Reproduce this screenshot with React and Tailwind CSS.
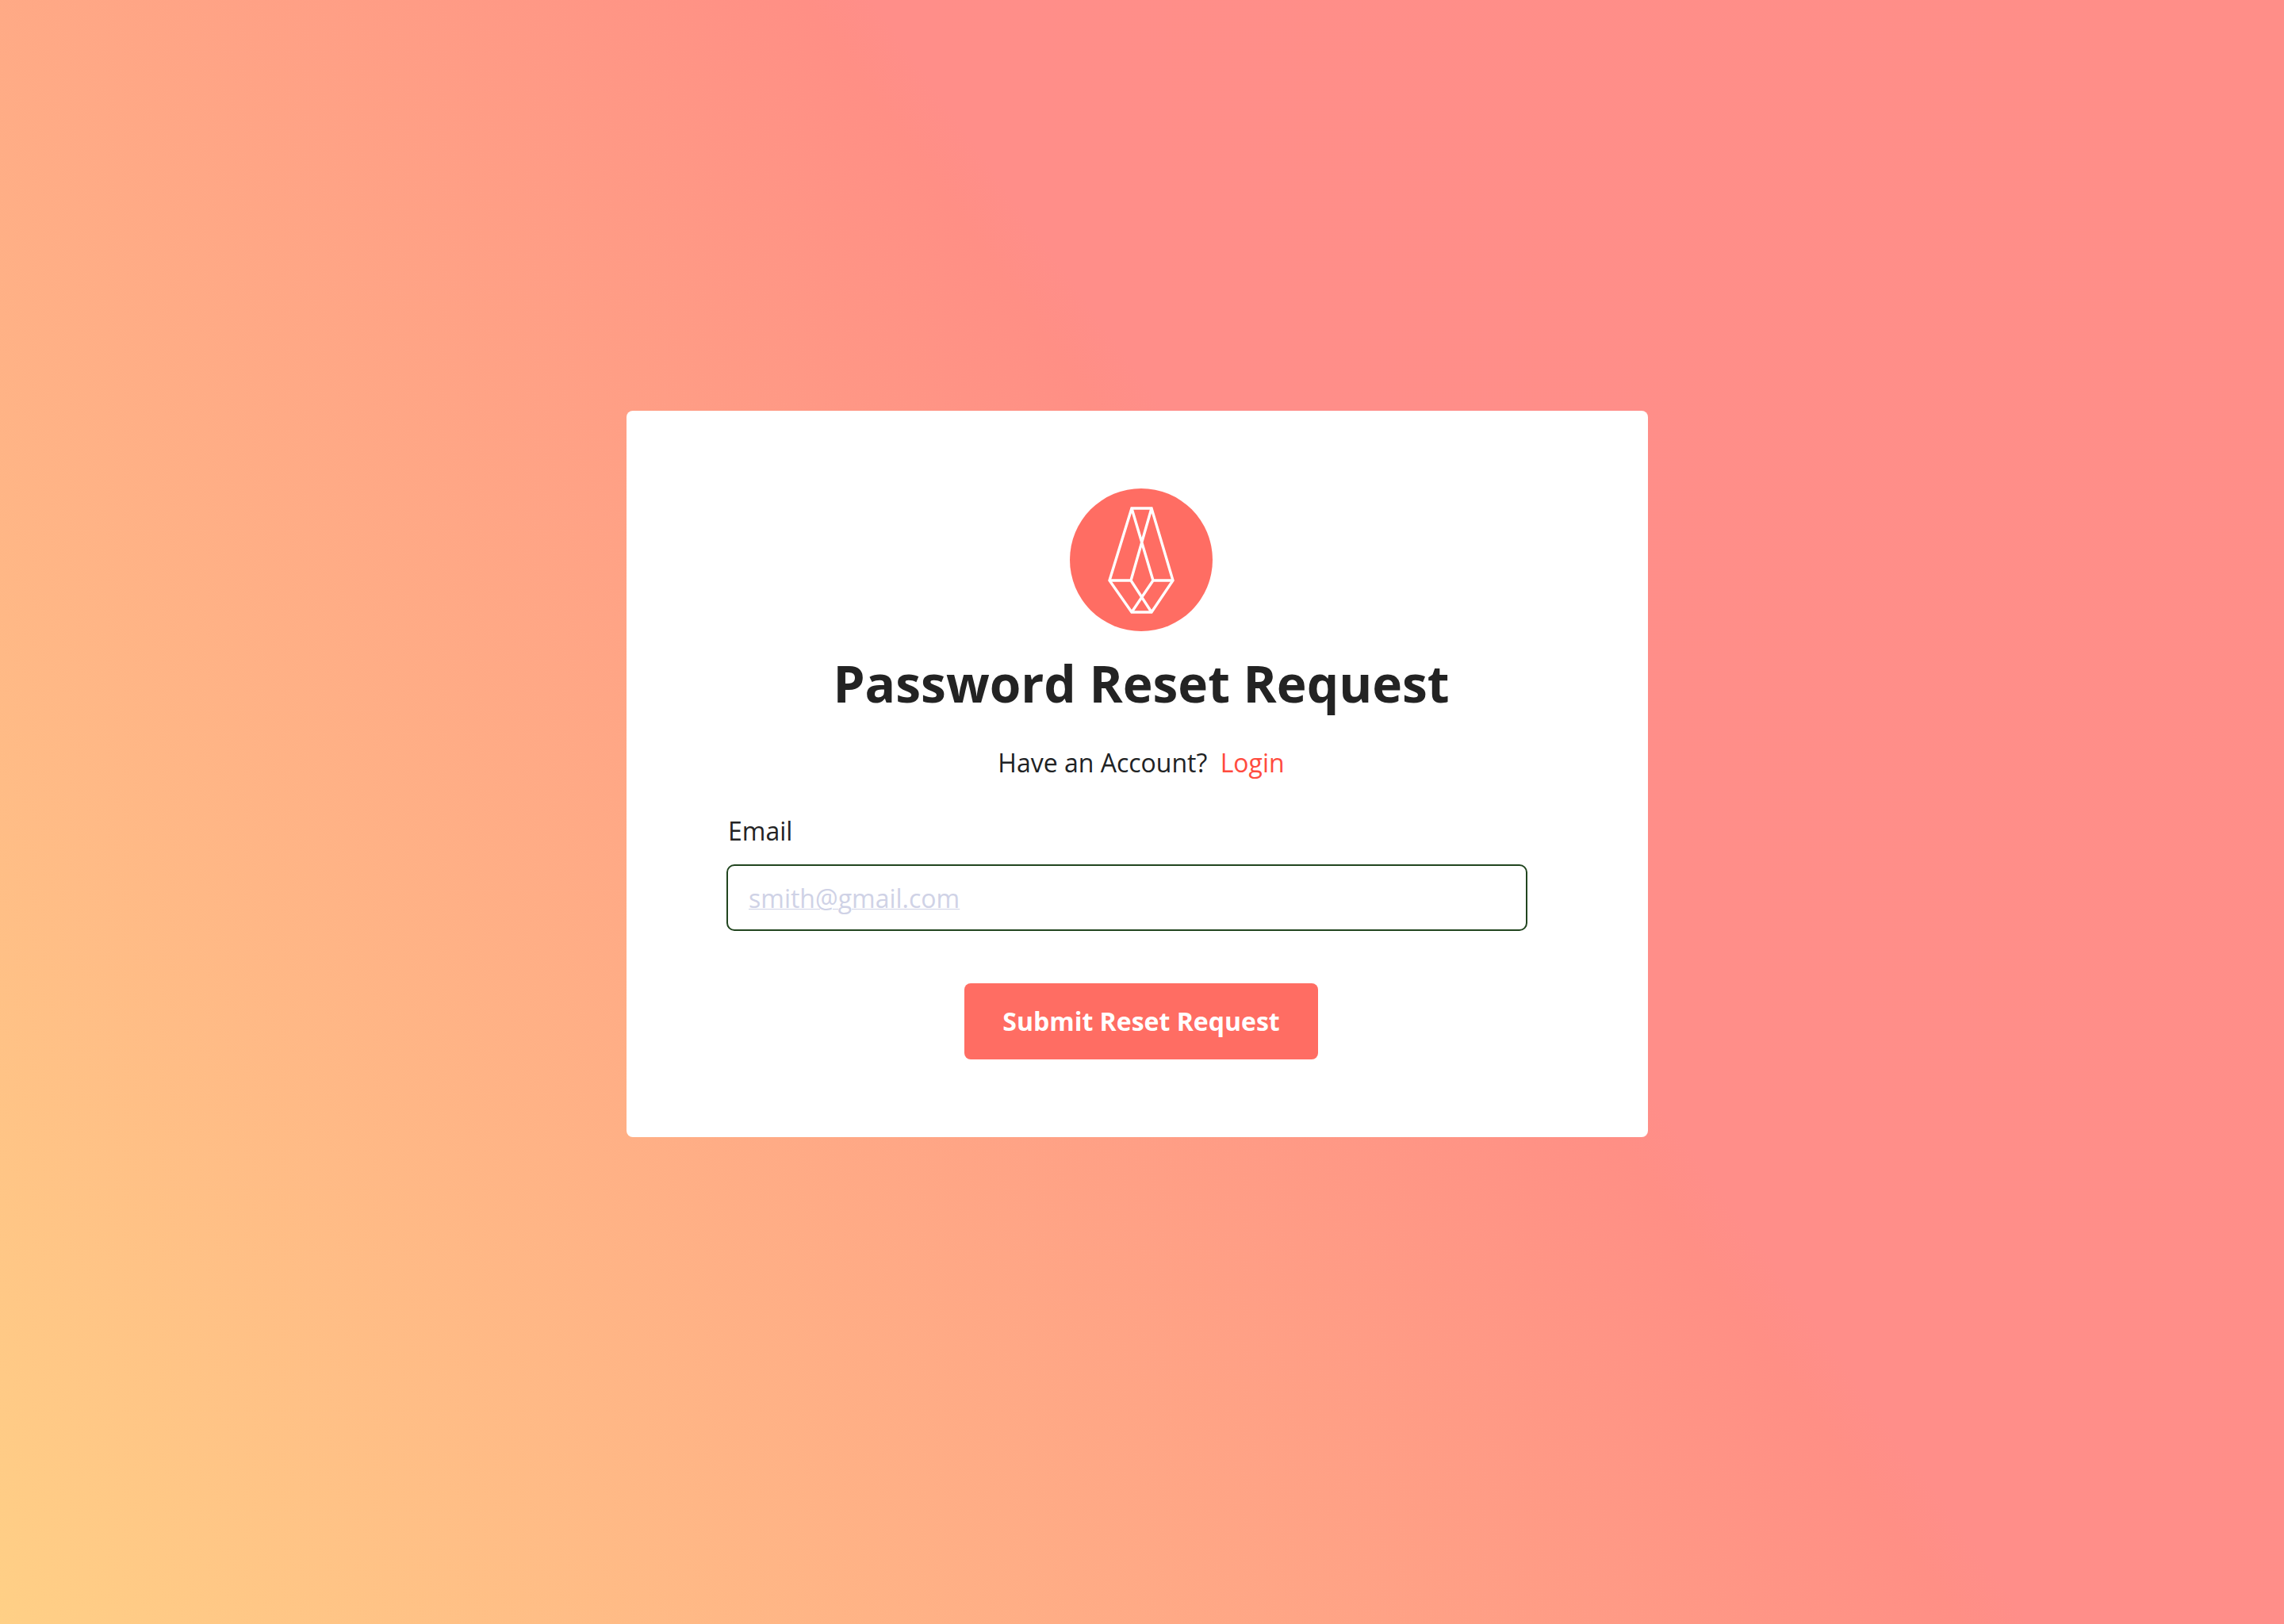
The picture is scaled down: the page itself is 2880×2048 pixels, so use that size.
export default function App() {
  return (
    <div className="min-h-screen flex flex-col items-center pt-[518px] font-['Open_Sans',sans-serif] text-[#232323] bg-[linear-gradient(54.5deg,#ffd086_0%,#ff8f85_57%,#ff8e89_59%,#ff8e88_100%)]">
      <main className="w-full max-w-[1288px] mr-[12px] rounded-lg bg-white py-[98px] pl-[126px] pr-[116px] flex flex-col items-center">
        <svg className="size-[180px]" viewBox="0 0 180 180" fill="none" aria-hidden="true">
          <circle cx="90" cy="90" r="90" fill="#ff6d63" />
          <g stroke="#fff" strokeWidth="3.4">
            <path d="M78 25H103L130 116L103 156H78L50 116Z" />
            <path d="M50 116H77L103 25M78 25L105 116H130M77 116L103 156M105 116L78 156" />
          </g>
        </svg>
        <h1 className="mt-[22px] text-[64px] leading-[88px] font-bold">Password Reset Request</h1>
        <p className="mt-[34px] text-[32px] leading-[44px] text-[#202224]">
          Have an Account? <a href="#login" className="ml-2 text-[#ff4b3e]">Login</a>
        </p>
        <form className="w-full flex flex-col items-center mt-[42px]">
          <label htmlFor="email" className="self-start pl-0.5 text-[32px] leading-[44px]">Email</label>
          <input id="email" type="email" placeholder="smith@gmail.com" className="mt-5 self-start w-full max-w-[1010px] h-[84px] border-2 border-[#21451f] rounded-[10px] px-[26px] text-[32px] placeholder:text-[#cfd2e6] placeholder:underline placeholder:decoration-1" />
          <button type="button" className="mt-[66px] h-24 px-12 rounded-lg bg-[#ff6d63] text-white text-[32px] font-bold">Submit Reset Request</button>
        </form>
      </main>
    </div>
  );
}
